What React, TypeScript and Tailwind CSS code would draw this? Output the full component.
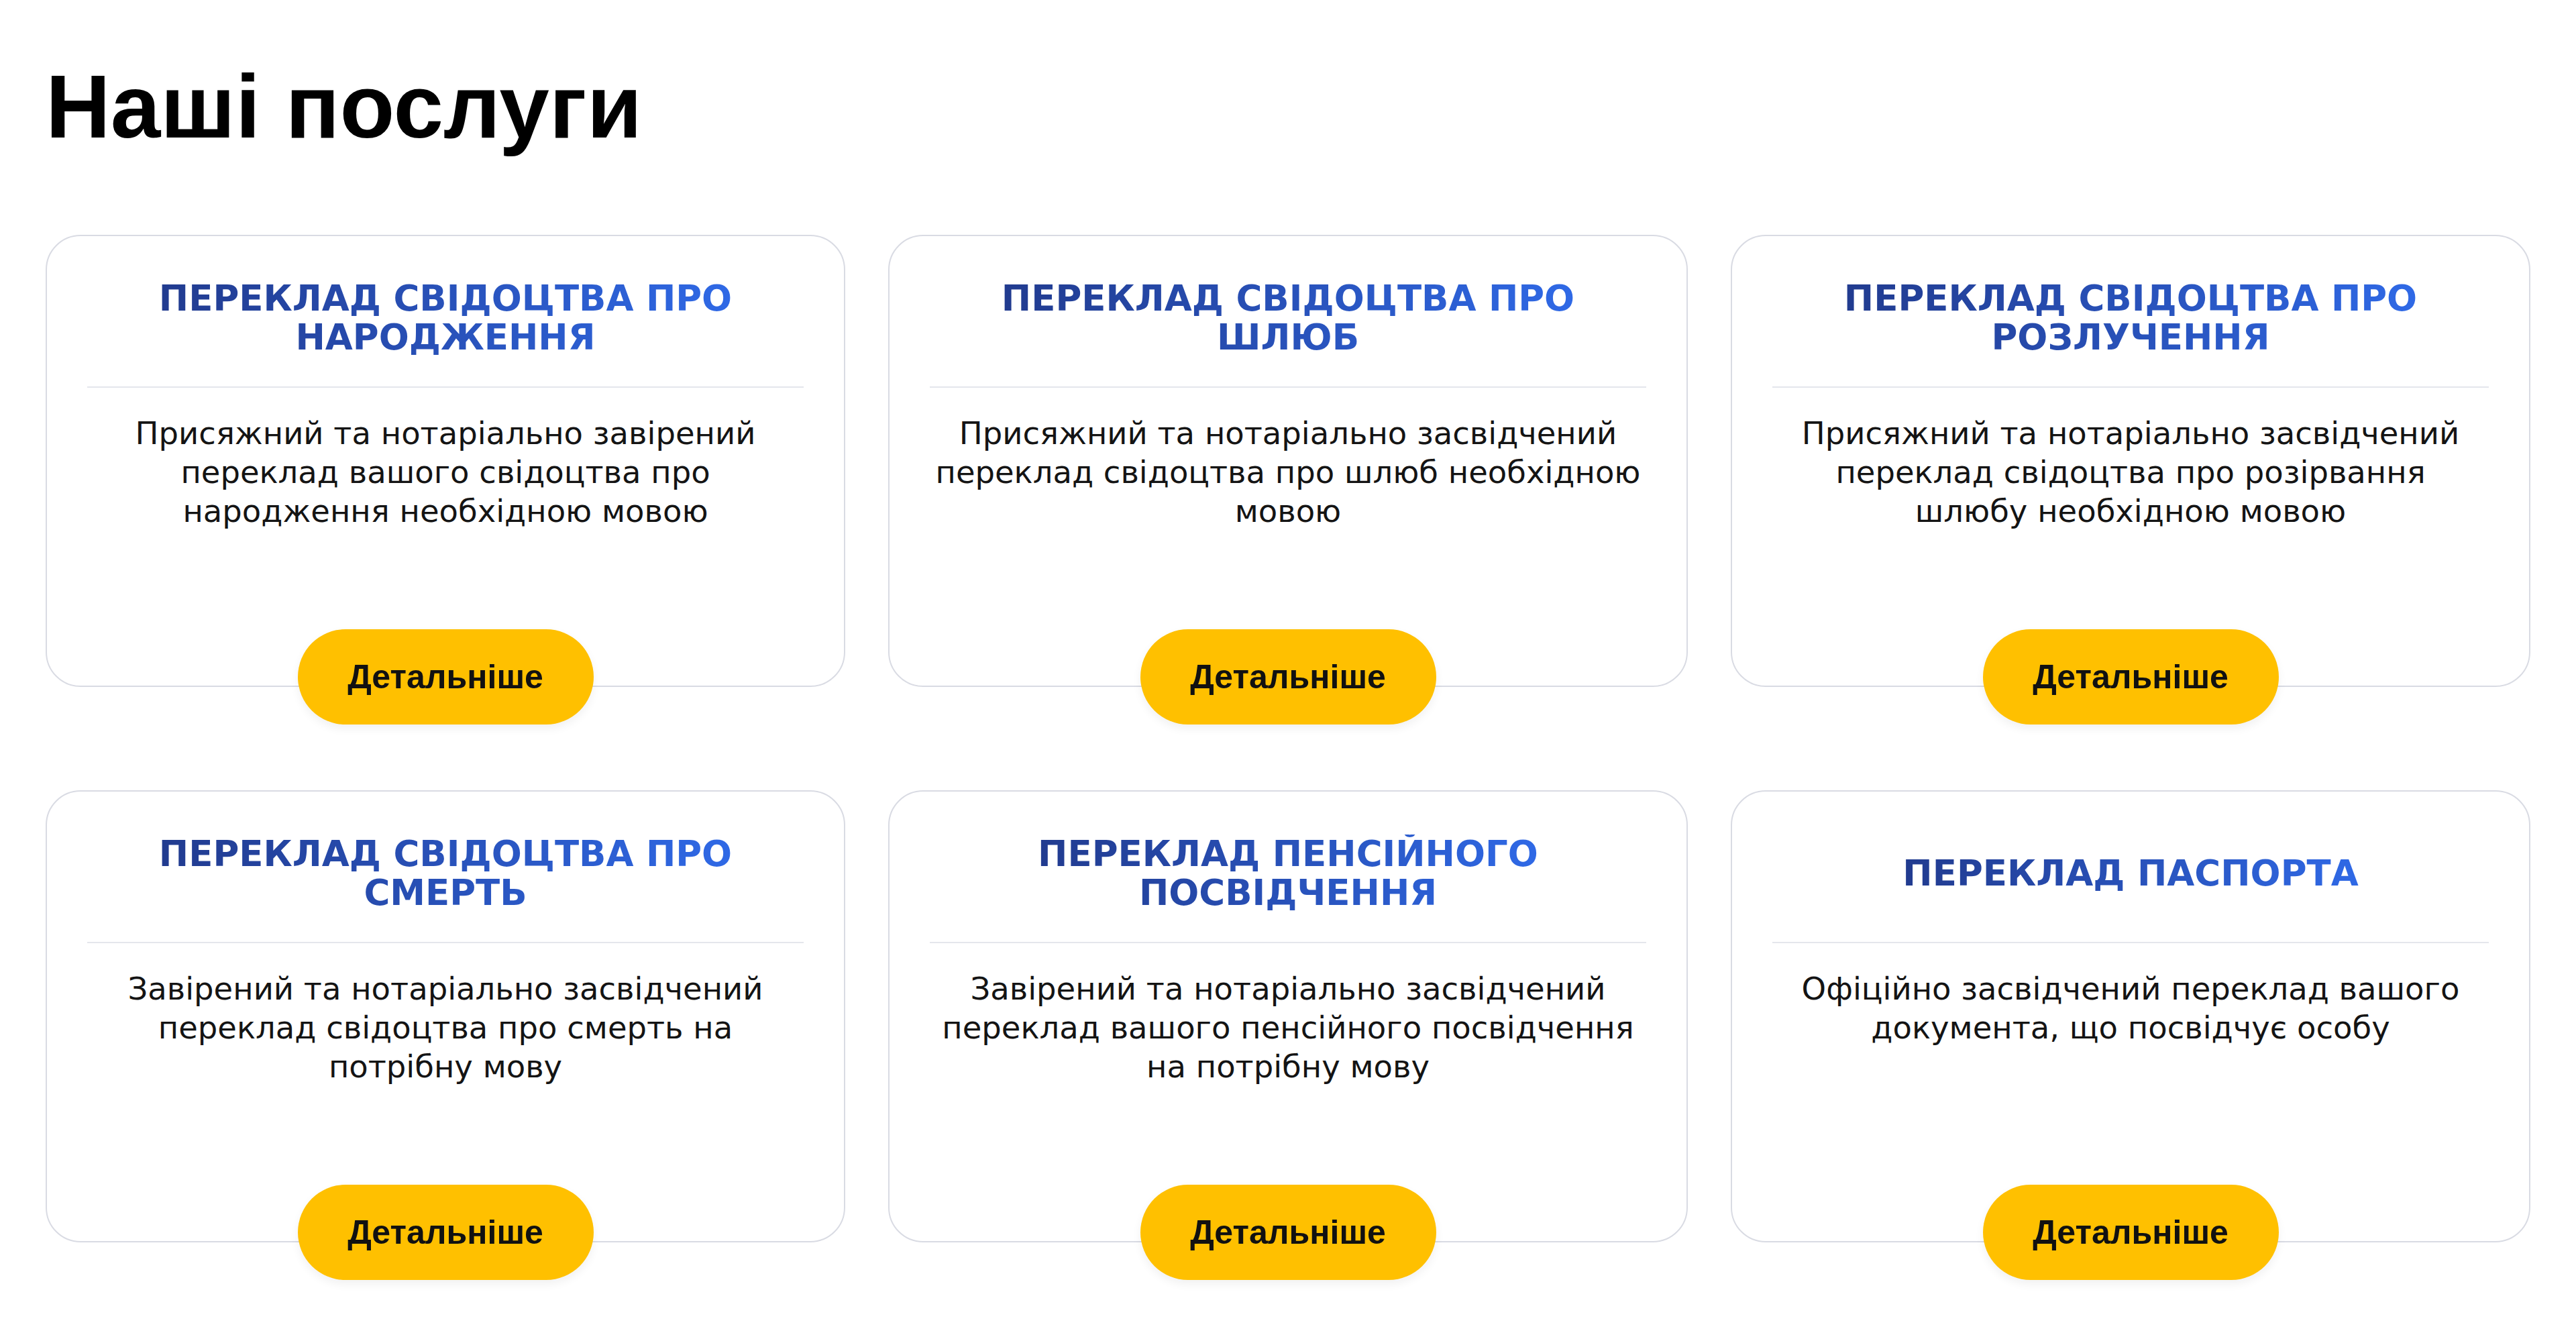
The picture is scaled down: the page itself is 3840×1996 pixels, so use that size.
import React from 'react';

type Service = {
  title: string;
  text: string;
};

const services: Service[] = [
  {
    title: 'ПЕРЕКЛАД СВІДОЦТВА ПРО\nНАРОДЖЕННЯ',
    text: 'Присяжний та нотаріально завірений\nпереклад вашого свідоцтва про\nнародження необхідною мовою',
  },
  {
    title: 'ПЕРЕКЛАД СВІДОЦТВА ПРО\nШЛЮБ',
    text: 'Присяжний та нотаріально засвідчений\nпереклад свідоцтва про шлюб необхідною\nмовою',
  },
  {
    title: 'ПЕРЕКЛАД СВІДОЦТВА ПРО\nРОЗЛУЧЕННЯ',
    text: 'Присяжний та нотаріально засвідчений\nпереклад свідоцтва про розірвання\nшлюбу необхідною мовою',
  },
  {
    title: 'ПЕРЕКЛАД СВІДОЦТВА ПРО\nСМЕРТЬ',
    text: 'Завірений та нотаріально засвідчений\nпереклад свідоцтва про смерть на\nпотрібну мову',
  },
  {
    title: 'ПЕРЕКЛАД ПЕНСІЙНОГО\nПОСВІДЧЕННЯ',
    text: 'Завірений та нотаріально засвідчений\nпереклад вашого пенсійного посвідчення\nна потрібну мову',
  },
  {
    title: 'ПЕРЕКЛАД ПАСПОРТА',
    text: 'Офіційно засвідчений переклад вашого\nдокумента, що посвідчує особу',
  },
];

const ServiceCard = ({ service }: { service: Service }) => {
  return (
    <div className="flex h-[674px] flex-col rounded-[52px] border-2 border-[#d9dbe3] bg-white px-[60px] pt-[64px]">
      {/* Title */}
      <div className="flex h-[116px] items-center justify-center text-center">
        <h3 className="inline-block whitespace-pre-line bg-gradient-to-r from-[#213b8f] to-[#2f69e6] bg-clip-text font-['DejaVu_Sans',sans-serif] text-[53px] font-bold leading-[58px] text-transparent">
          {service.title}
        </h3>
      </div>

      <div className="mt-[44px] h-[2px] w-full bg-[#e4e6ec]" />

      {/* Description */}
      <p className="mt-[39px] whitespace-pre-line text-center font-['DejaVu_Sans',sans-serif] text-[46.5px] leading-[58px] text-[#141414]">
        {service.text}
      </p>

      <button className="mt-auto mb-[-58px] flex h-[142px] w-[441px] shrink-0 items-center justify-center self-center rounded-full bg-[#ffc000] font-['Liberation_Sans',Arial,sans-serif] text-[50px] font-bold text-[#111111] shadow-[0_6px_14px_rgba(0,0,0,0.06)]">
        Детальніше
      </button>
    </div>
  );
};

const App = () => {
  return (
    <div className="min-h-screen bg-white px-[68px] pt-[93px] pb-[140px]">
      <h1 className="mb-[125px] font-['Liberation_Sans',Arial,sans-serif] text-[134px] font-bold leading-[132px] text-black">
        Наші послуги
      </h1>

      <div className="grid grid-cols-3 gap-x-[64px] gap-y-[154px]">
        {services.map((service) => (
          <ServiceCard key={service.title} service={service} />
        ))}
      </div>
    </div>
  );
};

export default App;
